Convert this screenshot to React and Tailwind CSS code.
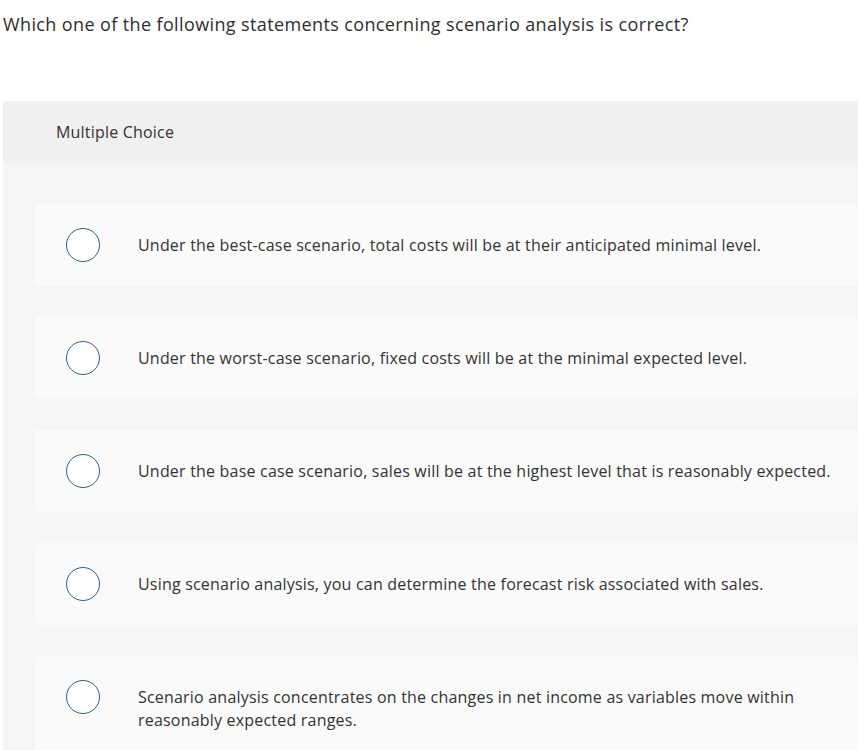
const options = [
    'Under the best-case scenario, total costs will be at their anticipated minimal level.',
    'Under the worst-case scenario, fixed costs will be at the minimal expected level.',
    'Under the base case scenario, sales will be at the highest level that is reasonably expected.',
    'Using scenario analysis, you can determine the forecast risk associated with sales.',
    'Scenario analysis concentrates on the changes in net income as variables move within reasonably expected ranges.',
];

function Option({ text }) {
    return (
        <div className="flex items-start rounded-[4px] bg-[#fafafa] pl-[31px] pr-[12px] py-[24px]">
            <div className="h-[34px] w-[34px] shrink-0 rounded-full border-[1.5px] border-[#2d5f8e] bg-white" />
            <div className="ml-[38px] flex-1 pt-[6px] text-[16px] leading-[23px] tracking-[0.2px] text-[#333]">
                {text}
            </div>
        </div>
    );
}

export default function App() {
    return (
        <div className="h-[750px] w-[858px] overflow-hidden bg-white" style={{ fontFamily: '"Open Sans", Arial, sans-serif' }}>
            <div className="pl-[3px] pt-[12px] text-[18px] leading-[24px] tracking-[0.38px] text-[#2e2e2e]">
                Which one of the following statements concerning scenario analysis is correct?
            </div>
            <div className="ml-[3px] mt-[65px] rounded-tl-[4px] bg-[#f5f5f5]">
                <div className="flex h-[62px] items-center rounded-tl-[4px] bg-[#f0f0f0] pl-[53px] text-[16px] tracking-[0.2px] text-[#333]">
                    Multiple Choice
                </div>
                <div className="flex flex-col gap-[31px] pl-[32px] pt-[41px] pb-[30px]">
                    {options.map((text, i) => (
                        <Option key={i} text={text} />
                    ))}
                </div>
            </div>
        </div>
    );
}
